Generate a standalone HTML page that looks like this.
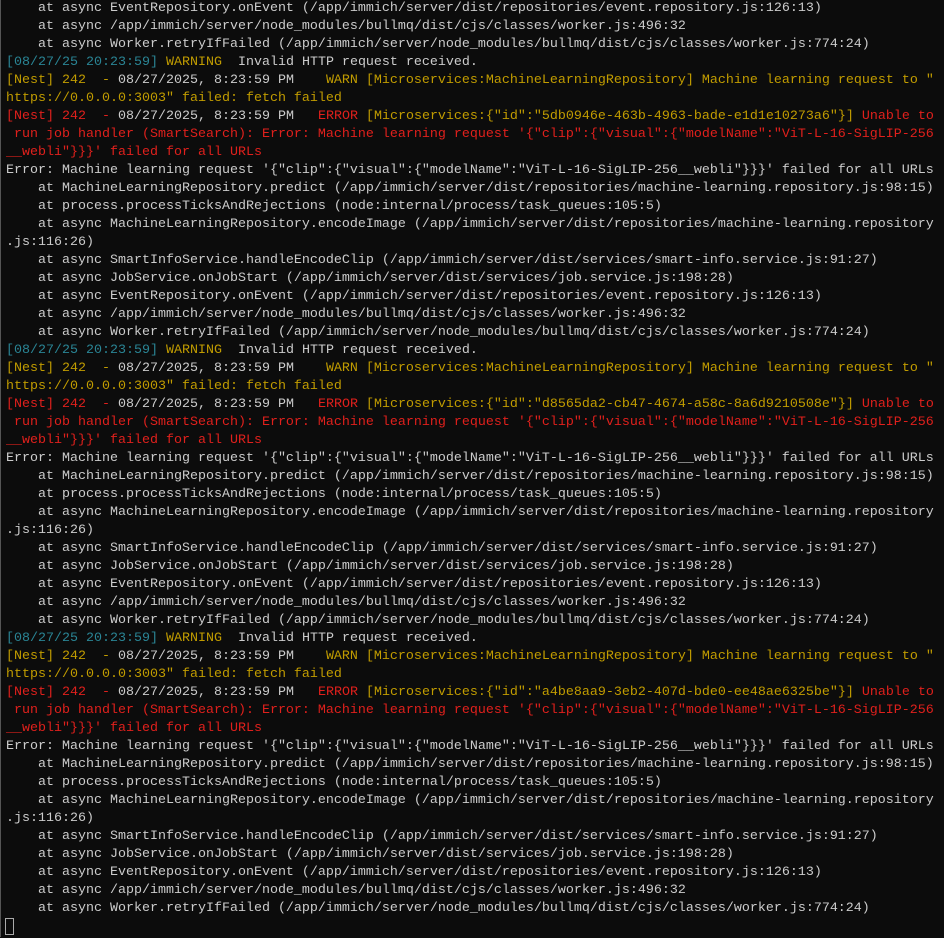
<!DOCTYPE html>
<html><head><meta charset="utf-8"><style>
html,body{margin:0;padding:0;background:#0c0c0c;width:944px;height:937px;overflow:hidden}
body{border-left:1px solid #555;box-sizing:border-box}
pre{margin:0;position:absolute;top:0px;left:6px;font-family:"Liberation Mono",monospace;font-size:13.33px;line-height:18px;color:#cccccc;white-space:pre}
.t{color:#2a8595}.y{color:#c19c00}.r{color:#e0201c}.w{color:#cccccc}
.cur{display:inline-block;width:7px;height:15px;border:1px solid #aaa;vertical-align:-4px;margin-left:-1px}
</style></head><body><pre>    at async EventRepository.onEvent (/app/immich/server/dist/repositories/event.repository.js:126:13)
    at async /app/immich/server/node_modules/bullmq/dist/cjs/classes/worker.js:496:32
    at async Worker.retryIfFailed (/app/immich/server/node_modules/bullmq/dist/cjs/classes/worker.js:774:24)
<span class="t">[08/27/25 20:23:59]</span> <span class="y">WARNING</span>  Invalid HTTP request received.
<span class="y">[Nest] 242  - </span>08/27/2025, 8:23:59 PM    <span class="y">WARN</span> <span class="y">[Microservices:MachineLearningRepository]</span> <span class="y">Machine learning request to "</span>
<span class="y">https://0.0.0.0:3003" failed: fetch failed</span>
<span class="r">[Nest] 242  - </span>08/27/2025, 8:23:59 PM   <span class="r">ERROR</span> <span class="y">[Microservices:{"id":"5db0946e-463b-4963-bade-e1d1e10273a6"}]</span> <span class="r">Unable to</span>
<span class="r"> run job handler (SmartSearch): Error: Machine learning request '{"clip":{"visual":{"modelName":"ViT-L-16-SigLIP-256</span>
<span class="r">__webli"}}}' failed for all URLs</span>
Error: Machine learning request '{"clip":{"visual":{"modelName":"ViT-L-16-SigLIP-256__webli"}}}' failed for all URLs
    at MachineLearningRepository.predict (/app/immich/server/dist/repositories/machine-learning.repository.js:98:15)
    at process.processTicksAndRejections (node:internal/process/task_queues:105:5)
    at async MachineLearningRepository.encodeImage (/app/immich/server/dist/repositories/machine-learning.repository
.js:116:26)
    at async SmartInfoService.handleEncodeClip (/app/immich/server/dist/services/smart-info.service.js:91:27)
    at async JobService.onJobStart (/app/immich/server/dist/services/job.service.js:198:28)
    at async EventRepository.onEvent (/app/immich/server/dist/repositories/event.repository.js:126:13)
    at async /app/immich/server/node_modules/bullmq/dist/cjs/classes/worker.js:496:32
    at async Worker.retryIfFailed (/app/immich/server/node_modules/bullmq/dist/cjs/classes/worker.js:774:24)
<span class="t">[08/27/25 20:23:59]</span> <span class="y">WARNING</span>  Invalid HTTP request received.
<span class="y">[Nest] 242  - </span>08/27/2025, 8:23:59 PM    <span class="y">WARN</span> <span class="y">[Microservices:MachineLearningRepository]</span> <span class="y">Machine learning request to "</span>
<span class="y">https://0.0.0.0:3003" failed: fetch failed</span>
<span class="r">[Nest] 242  - </span>08/27/2025, 8:23:59 PM   <span class="r">ERROR</span> <span class="y">[Microservices:{"id":"d8565da2-cb47-4674-a58c-8a6d9210508e"}]</span> <span class="r">Unable to</span>
<span class="r"> run job handler (SmartSearch): Error: Machine learning request '{"clip":{"visual":{"modelName":"ViT-L-16-SigLIP-256</span>
<span class="r">__webli"}}}' failed for all URLs</span>
Error: Machine learning request '{"clip":{"visual":{"modelName":"ViT-L-16-SigLIP-256__webli"}}}' failed for all URLs
    at MachineLearningRepository.predict (/app/immich/server/dist/repositories/machine-learning.repository.js:98:15)
    at process.processTicksAndRejections (node:internal/process/task_queues:105:5)
    at async MachineLearningRepository.encodeImage (/app/immich/server/dist/repositories/machine-learning.repository
.js:116:26)
    at async SmartInfoService.handleEncodeClip (/app/immich/server/dist/services/smart-info.service.js:91:27)
    at async JobService.onJobStart (/app/immich/server/dist/services/job.service.js:198:28)
    at async EventRepository.onEvent (/app/immich/server/dist/repositories/event.repository.js:126:13)
    at async /app/immich/server/node_modules/bullmq/dist/cjs/classes/worker.js:496:32
    at async Worker.retryIfFailed (/app/immich/server/node_modules/bullmq/dist/cjs/classes/worker.js:774:24)
<span class="t">[08/27/25 20:23:59]</span> <span class="y">WARNING</span>  Invalid HTTP request received.
<span class="y">[Nest] 242  - </span>08/27/2025, 8:23:59 PM    <span class="y">WARN</span> <span class="y">[Microservices:MachineLearningRepository]</span> <span class="y">Machine learning request to "</span>
<span class="y">https://0.0.0.0:3003" failed: fetch failed</span>
<span class="r">[Nest] 242  - </span>08/27/2025, 8:23:59 PM   <span class="r">ERROR</span> <span class="y">[Microservices:{"id":"a4be8aa9-3eb2-407d-bde0-ee48ae6325be"}]</span> <span class="r">Unable to</span>
<span class="r"> run job handler (SmartSearch): Error: Machine learning request '{"clip":{"visual":{"modelName":"ViT-L-16-SigLIP-256</span>
<span class="r">__webli"}}}' failed for all URLs</span>
Error: Machine learning request '{"clip":{"visual":{"modelName":"ViT-L-16-SigLIP-256__webli"}}}' failed for all URLs
    at MachineLearningRepository.predict (/app/immich/server/dist/repositories/machine-learning.repository.js:98:15)
    at process.processTicksAndRejections (node:internal/process/task_queues:105:5)
    at async MachineLearningRepository.encodeImage (/app/immich/server/dist/repositories/machine-learning.repository
.js:116:26)
    at async SmartInfoService.handleEncodeClip (/app/immich/server/dist/services/smart-info.service.js:91:27)
    at async JobService.onJobStart (/app/immich/server/dist/services/job.service.js:198:28)
    at async EventRepository.onEvent (/app/immich/server/dist/repositories/event.repository.js:126:13)
    at async /app/immich/server/node_modules/bullmq/dist/cjs/classes/worker.js:496:32
    at async Worker.retryIfFailed (/app/immich/server/node_modules/bullmq/dist/cjs/classes/worker.js:774:24)
<span class="cur"></span></pre></body></html>
